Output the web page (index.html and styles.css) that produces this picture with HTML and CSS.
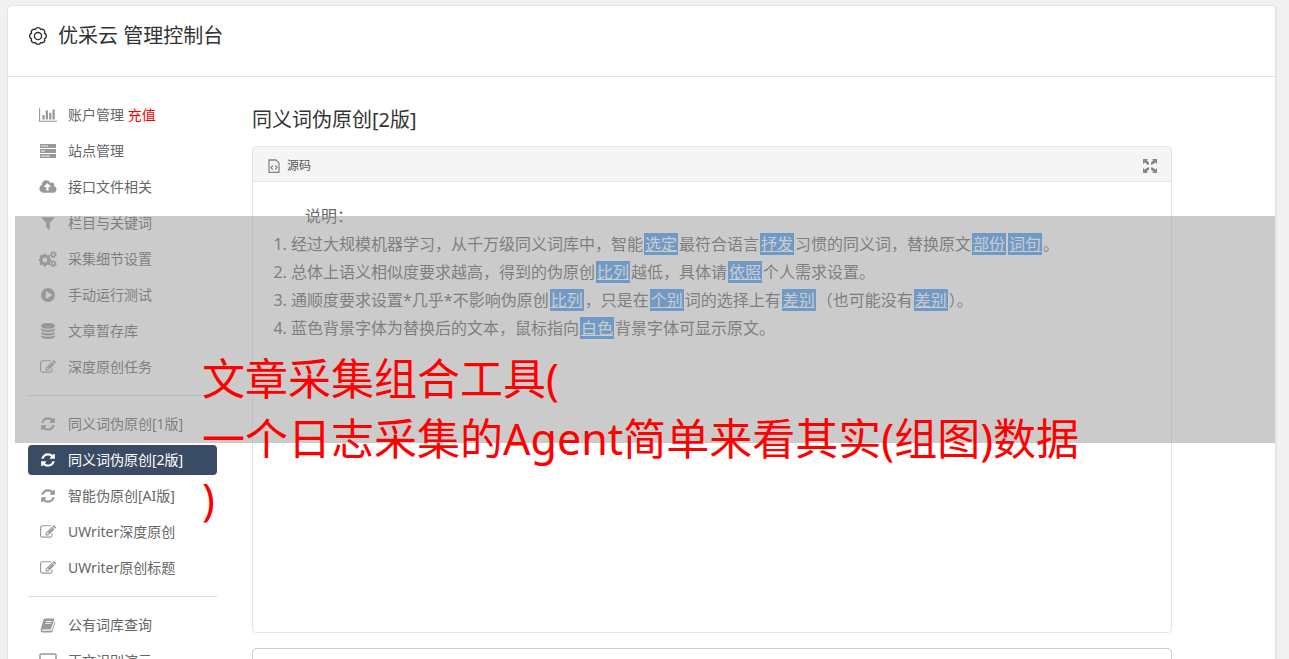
FILE: index.html
```html
<!DOCTYPE html>
<html lang="zh-CN">
<head>
<meta charset="utf-8">
<title>优采云 管理控制台</title>
<link rel="stylesheet" href="styles.css">
</head>
<body>
<svg class="symbols" aria-hidden="true">
  <symbol id="refresh" viewBox="0 0 1792 1792"><path d="M1639 1056q0 5-1 7-64 268-268 434.500t-478 166.500q-146 0-282.500-55t-243.500-157l-129 129q-19 19-45 19t-45-19-19-45v-448q0-26 19-45t45-19h448q26 0 45 19t19 45-19 45l-137 137q71 66 161 102t187 36q134 0 250-65t186-179q11-17 53-117 8-23 30-23h192q13 0 22.500 9.500t9.500 22.500zm25-800v448q0 26-19 45t-45 19h-448q-26 0-45-19t-19-45 19-45l138-138q-148-137-349-137-134 0-250 65t-186 179q-11 17-53 117-8 23-30 23h-199q-13 0-22.500-9.500t-9.500-22.500v-7q65-268 270-434.500t480-166.500q146 0 284 55.500t245 156.500l130-129q19-19 45-19t45 19 19 45z"/></symbol>
  <symbol id="edit" viewBox="0 0 1792 1792"><path d="M888 1184l116-116-152-152-116 116v56h96v96h56zm440-720q-16-16-33 1l-350 350q-17 17-1 33t33-1l350-350q17-17 1-33zm80 594v190q0 119-84.500 203.500t-203.500 84.500h-832q-119 0-203.500-84.500t-84.500-203.500v-832q0-119 84.500-203.500t203.500-84.500h832q63 0 117 25 15 7 18 23 3 17-9 29l-49 49q-14 14-32 8-23-6-45-6h-832q-66 0-113 47t-47 113v832q0 66 47 113t113 47h832q66 0 113-47t47-113v-126q0-13 9-22l64-64q15-15 35-7t20 29zm-96-738l288 288-672 672h-288v-288zm444 132l-92 92-288-288 92-92q28-28 68-28t68 28l152 152q28 28 28 68t-28 68z"/></symbol>
</svg>
<div class="card">
  <header class="top">
    <svg class="top-icon" viewBox="0 0 24 24" fill="none" stroke="currentColor" stroke-width="1.700" aria-hidden="true"><path d="M19.900 15.300A3.600 3.600 0 0 1 15.300 19.900A3.600 3.600 0 0 1 8.700 19.900A3.600 3.600 0 0 1 4.100 15.300A3.600 3.600 0 0 1 4.100 8.700A3.600 3.600 0 0 1 8.700 4.100A3.600 3.600 0 0 1 15.300 4.100A3.600 3.600 0 0 1 19.900 8.700A3.600 3.600 0 0 1 19.900 15.300Z"/><circle cx="12" cy="12" r="4.300"/></svg>
    <h1 class="top-title">优采云 管理控制台</h1>
  </header>
  <div class="layout">
    <nav class="side">
      <a class="item" href="#"><svg class="icon" viewBox="0 0 2048 1792"><path d="M640 896v512h-256v-512h256zm384-512v1024h-256v-1024h256zm1024 1152v128h-2048v-1536h128v1408h1920zm-640-896v768h-256v-768h256zm384-384v1152h-256v-1152h256z"/></svg><span>账户管理 <span class="alert">充值</span></span></a>
      <a class="item" href="#"><svg class="icon" viewBox="0 0 18 16"><path fill-rule="evenodd" d="M1 1h16v4H1zM1 6h16v4H1zM1 11h16v4H1zM2 2v2h7V2zM2 7v2h4V7zM2 12v2h9v-2z"/><path opacity=".6" d="M2 2h12v2H2zM2 7h12v2H2zM2 12h12v2H2z"/></svg><span>站点管理</span></a>
      <a class="item" href="#"><svg class="icon" viewBox="0 0 1920 1792"><path d="M1280 864q0-14-9-23l-352-352q-9-9-23-9t-23 9l-351 351q-10 12-10 24 0 14 9 23t23 9h224v352q0 13 9.500 22.500t22.500 9.500h192q13 0 22.500-9.500t9.500-22.500v-352h224q13 0 22.500-9.500t9.500-22.500zm640 288q0 159-112.500 271.500t-271.500 112.500h-1088q-185 0-316.500-131.500t-131.500-316.500q0-130 70-240t188-165q-2-30-2-43 0-212 150-362t362-150q156 0 285.500 87t188.500 231q71-62 166-62 106 0 181 75t75 181q0 76-41 138 130 31 213.500 135.500t83.500 238.500z"/></svg><span>接口文件相关</span></a>
      <a class="item" href="#"><svg class="icon" viewBox="0 0 1792 1792"><path d="M1595 295q17 41-14 70l-493 493v742q0 42-39 59-13 5-25 5-27 0-45-19l-256-256q-19-19-19-45v-486l-493-493q-31-29-14-70 17-39 59-39h1280q42 0 59 39z"/></svg><span>栏目与关键词</span></a>
      <a class="item" href="#"><svg class="icon" viewBox="0 0 18 16" fill="none" stroke="currentColor"><g stroke="none"><path fill-rule="evenodd" d="M4.800 2.500h2.200l.4 1.500 1 .5 1.400-.8 1.500 1.500-.8 1.400.4 1 1.500.4v2.100l-1.500.4-.4 1 .8 1.400-1.500 1.500-1.400-.8-1 .4-.4 1.500H4.800L4.400 14l-1-.4-1.400.8-1.500-1.500.8-1.400-.4-1-1-.4V8l1-.4.4-1-.8-1.400L2 3.700l1.400.8 1-.5zM5.900 6.600a2.400 2.400 0 1 0 0 4.800a2.400 2.400 0 1 0 0-4.800z"/></g><g stroke-width="1.500"><circle cx="14.300" cy="3.700" r="1.900"/><circle cx="14.300" cy="12.700" r="1.900"/></g><g stroke-width="1.200" stroke-dasharray="1.300 1.210"><circle cx="14.300" cy="3.700" r="2.800"/><circle cx="14.300" cy="12.700" r="2.800"/></g></svg><span>采集细节设置</span></a>
      <a class="item" href="#"><svg class="icon" viewBox="0 0 16 16"><path fill-rule="evenodd" d="M8 1a7 7 0 1 0 0 14A7 7 0 1 0 8 1zM6.300 4.300Q5.800 4.400 5.800 5v6q0 .7.8.6l5-3q.6-.5 0-1.100l-5-3z"/></svg><span>手动运行测试</span></a>
      <a class="item" href="#"><svg class="icon" viewBox="0 0 1792 1792"><path d="M896 768q237 0 443-43t325-127v170q0 69-103 128t-280 93.500-385 34.500-385-34.500-280-93.500-103-128v-170q119 84 325 127t443 43zm0 768q237 0 443-43t325-127v170q0 69-103 128t-280 93.500-385 34.500-385-34.500-280-93.500-103-128v-170q119 84 325 127t443 43zm0-384q237 0 443-43t325-127v170q0 69-103 128t-280 93.500-385 34.500-385-34.500-280-93.500-103-128v-170q119 84 325 127t443 43zm0-1152q208 0 385 34.500t280 93.500 103 128v128q0 69-103 128t-280 93.500-385 34.500-385-34.500-280-93.500-103-128v-128q0-69 103-128t280-93.500 385-34.500z"/></svg><span>文章暂存库</span></a>
      <a class="item" href="#"><svg class="icon"><use href="#edit"/></svg><span>深度原创任务</span></a>
      <hr class="rule">
      <a class="item" href="#"><svg class="icon"><use href="#refresh"/></svg><span>同义词伪原创[1版]</span></a>
      <a class="item active" href="#" aria-current="page"><svg class="icon"><use href="#refresh"/></svg><span>同义词伪原创[2版]</span></a>
      <a class="item" href="#"><svg class="icon"><use href="#refresh"/></svg><span>智能伪原创[AI版]</span></a>
      <a class="item" href="#"><svg class="icon"><use href="#edit"/></svg><span>UWriter深度原创</span></a>
      <a class="item" href="#"><svg class="icon"><use href="#edit"/></svg><span>UWriter原创标题</span></a>
      <hr class="rule">
      <a class="item" href="#"><svg class="icon" viewBox="0 0 16 16"><path fill-rule="evenodd" d="M4.500 1.500h8.600q1.300 0 .9 1.300l-2.700 8.800q-.3.900-1.200.9H2.500q-.8 0-.8.500 0 .8 1 .8h8.500q.7 0 .9-.7l2.600-8.600q.8.400.5 1.300l-2.500 8.200q-.4 1.500-1.800 1.500H2.600Q.9 15.500.6 13.600q-.1-.9.200-1.800L3.400 3q.3-1.300 1.100-1.500zM6 4l-.2.900h5.600l.3-.9zM5.300 6.200l-.3.900h5.700l.3-.9z"/></svg><span>公有词库查询</span></a>
      <a class="item" href="#"><svg class="icon" viewBox="0 0 18 16" fill="none" stroke="currentColor" stroke-width="1.500"><rect x="1" y="1" width="16" height="10" rx="1"/><path d="M0 14h18" stroke-width="2"/></svg><span>正文识别演示</span></a>
    </nav>
    <main class="main">
      <h2 class="title">同义词伪原创[2版]</h2>
      <section class="editor">
        <div class="toolbar">
          <button class="tool" type="button"><svg class="tool-icon" viewBox="0 0 14 16" fill="none" stroke="#888" stroke-width="1.300"><path d="M2 2h7l3 3v9.300H2z"/><path d="M5.800 7.500L4 9.600l1.800 2.100M8.200 7.500L10 9.600l-1.800 2.100"/></svg>源码</button>
          <button class="tool" type="button" aria-label="全屏"><svg class="full-icon" viewBox="0 0 14 14" fill="#888"><path d="M0 0h5L3.700 1.300 6 3.600v2.200H5L1.500 3.500 0 5zM14 0v5l-1.500-1.500L9 5.800H8V3.600l2.300-2.300L9 0zM0 14V9l1.500 1.500L5 8.200h1v2.200l-2.300 2.300L5 14zM14 14H9l1.300-1.300L8 10.400V8.200h1l3.500 2.300L14 9z"/></svg></button>
        </div>
        <div class="content">
          <p class="lead">说明：</p>
          <ol class="notes">
            <li>经过大规模机器学习，从千万级同义词库中，智能<a class="word" href="#">选定</a>最符合语言<a class="word" href="#">抒发</a>习惯的同义词，替换原文<a class="word" href="#">部份</a><a class="word" href="#">词句</a>。</li>
            <li>总体上语义相似度要求越高，得到的伪原创<a class="word" href="#">比列</a>越低，具体请<a class="word" href="#">依照</a>个人需求设置。</li>
            <li>通顺度要求设置*几乎*不影响伪原创<a class="word" href="#">比列</a>，只是在<a class="word" href="#">个别</a>词的选择上有<a class="word" href="#">差别</a>（也可能没有<a class="word" href="#">差别</a>）。</li>
            <li>蓝色背景字体为替换后的文本，鼠标指向<a class="word" href="#">白色</a>背景字体可显示原文。</li>
          </ol>
        </div>
      </section>
      <section class="result"></section>
    </main>
  </div>
</div>
<div class="shade"></div>
<p class="caption">文章采集组合工具(<br>一个日志采集的Agent简单来看其实(组图)数据<br>)</p>
</body>
</html>
```

FILE: styles.css
```css
* { box-sizing: border-box; }
body {
  position: relative;
  height: 100vh;
  margin: 0;
  padding: 5px 12px 0 7px;
  overflow: hidden;
  background: #f1f1f1;
  color: #666;
  font: 14px/20px "Noto Sans", "Noto Sans CJK SC", sans-serif;
}
.symbols { display: none; }
.card {
  min-height: 100vh;
  background: #fff;
  border: 1px solid #e5e5e5;
  border-right-width: 2px;
  border-radius: 5px;
}
.top {
  display: flex;
  align-items: center;
  gap: 10px;
  height: 71px;
  padding: 0 20px 10px;
  border-bottom: 1px solid #e5e5e5;
  color: #333;
}
.top-icon { width: 20px; height: 20px; }
.top-title, .title { margin: 0; color: #333; font-size: 20px; font-weight: 400; line-height: 28px; }
.layout {
  display: flex;
  gap: 35px;
  padding: 23px 103px 0 20px;
}
.side { display: flex; flex: 0 0 189px; flex-direction: column; gap: 6px; }
.item {
  display: flex;
  align-items: center;
  gap: 11px;
  height: 30px;
  padding: 0 11px;
  border-radius: 4px;
  color: #666;
  text-decoration: none;
  white-space: nowrap;
}
.item.active { background: #3a4b66; color: #fff; }
.icon { flex: none; width: 18px; height: 16px; color: #999; fill: currentColor; }
.icon[fill="none"] { fill: none; }
.icon[fill="none"] g[stroke="none"] { fill: currentColor; }
.active .icon { color: #fff; }
.alert { color: #f00; }
.rule { width: 100%; height: 1px; margin: 7px 0; border: 0; background: #ddd; }
.main { flex: 1; min-width: 0; padding-top: 6px; }
.title { margin-bottom: 12px; }
.editor { border: 1px solid #e5e5e5; border-radius: 4px; }
.toolbar {
  display: flex;
  align-items: center;
  justify-content: space-between;
  height: 35px;
  padding: 3px 14px 0;
  background: #f5f5f5;
  border-bottom: 1px solid #e5e5e5;
  border-radius: 3px 3px 0 0;
}
.tool {
  display: flex;
  align-items: center;
  gap: 6px;
  padding: 0;
  border: 0;
  background: none;
  color: #555;
  font: 12px/18px "Noto Sans", "Noto Sans CJK SC", sans-serif;
}
.tool-icon { width: 14px; height: 16px; }
.full-icon { width: 14px; height: 14px; }
.content { min-height: 450px; padding: 20px; font-size: 16px; line-height: 28px; }
.lead { margin: 0; text-indent: 2em; }
.notes { margin: 0; padding-left: 18px; }
.word { margin: 0 1px; padding: 0 1px; background: #469cf8; color: #fff; line-height: 20px; text-decoration: underline; }
.result { height: 80px; margin-top: 15px; border: 1px solid #ccc; border-radius: 4px; }
.shade {
  position: absolute;
  top: 216px;
  right: 14px;
  left: 15px;
  height: 227px;
  background: rgba(151, 151, 151, 0.5);
}
.caption {
  position: absolute;
  top: 349px;
  left: 202px;
  margin: 0;
  color: #f00;
  font-size: 43px;
  line-height: 60px;
}
```
